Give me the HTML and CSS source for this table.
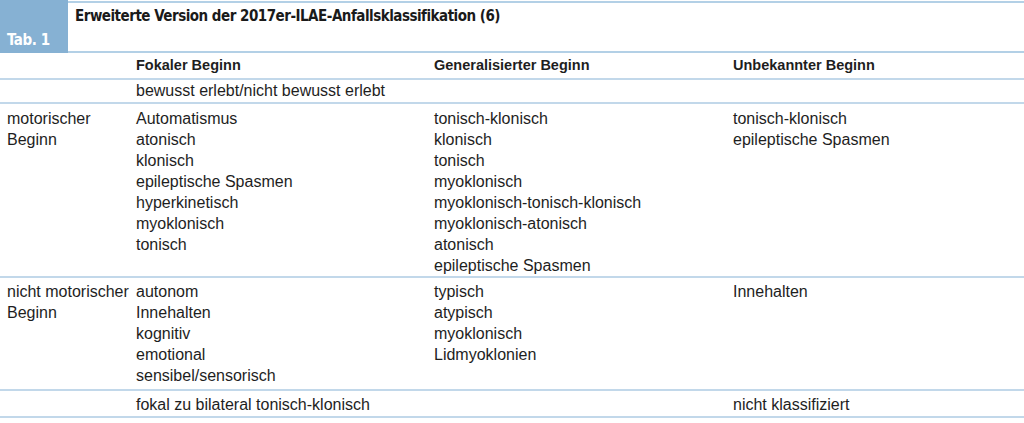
FILE: index.html
```html
<!DOCTYPE html>
<html lang="de">
<head>
<meta charset="utf-8">
<title>Tab. 1</title>
<link rel="stylesheet" href="styles.css">
</head>
<body>
<div class="caption">
  <div class="tab-label">Tab. 1</div>
  <div class="title">Erweiterte Version der 2017er-ILAE-Anfallsklassifikation (6)</div>
</div>
<table class="grid">
  <colgroup>
    <col class="c1"><col class="c2"><col class="c3"><col class="c4">
  </colgroup>
  <thead>
    <tr class="head">
      <th></th><th>Fokaler Beginn</th><th>Generalisierter Beginn</th><th>Unbekannter Beginn</th>
    </tr>
  </thead>
  <tbody>
    <tr class="sub">
      <td></td><td>bewusst erlebt/nicht bewusst erlebt</td><td></td><td></td>
    </tr>
    <tr class="motor">
      <td>motorischer<br>Beginn</td>
      <td>Automatismus<br>atonisch<br>klonisch<br>epileptische Spasmen<br>hyperkinetisch<br>myoklonisch<br>tonisch</td>
      <td>tonisch-klonisch<br>klonisch<br>tonisch<br>myoklonisch<br>myoklonisch-tonisch-klonisch<br>myoklonisch-atonisch<br>atonisch<br>epileptische Spasmen</td>
      <td>tonisch-klonisch<br>epileptische Spasmen</td>
    </tr>
    <tr class="nonmotor">
      <td>nicht motorischer<br>Beginn</td>
      <td>autonom<br>Innehalten<br>kognitiv<br>emotional<br>sensibel/sensorisch</td>
      <td>typisch<br>atypisch<br>myoklonisch<br>Lidmyoklonien</td>
      <td>Innehalten</td>
    </tr>
    <tr class="last">
      <td></td><td>fokal zu bilateral tonisch-klonisch</td><td></td><td>nicht klassifiziert</td>
    </tr>
  </tbody>
</table>
</body>
</html>
```

FILE: styles.css
```css
html, body {
  margin: 0;
  padding: 0;
  background: #ffffff;
}

body {
  width: 1024px;
  font-family: "Liberation Sans", Arial, sans-serif;
  color: #1e1e1e;
}

.caption {
  display: flex;
  margin-top: 1px;
  border-top: 2px solid #b3d0e6;
  border-bottom: 2px solid #b3d0e6;
  box-sizing: border-box;
  height: 52px;
}

.tab-label {
  width: 68px;
  flex: none;
  background: #86b1d3;
  color: #ffffff;
  font-family: "DejaVu Sans Condensed", "Liberation Sans", sans-serif;
  font-weight: bold;
  font-size: 15px;
  letter-spacing: -0.4px;
  display: flex;
  align-items: flex-end;
  padding: 0 0 4px 7px;
  box-sizing: border-box;
  margin-top: -3px;
  margin-bottom: -2px;
}

.title {
  padding: 3px 0 0 7px;
  font-family: "DejaVu Sans Condensed", "Liberation Sans", sans-serif;
  font-weight: bold;
  font-size: 15px;
  letter-spacing: -0.5px;
  line-height: 20px;
  color: #1a1a1a;
}

.grid {
  width: 1024px;
  border-collapse: collapse;
  table-layout: fixed;
  font-size: 16px;
  line-height: 21px;
}

.c1 { width: 128px; }
.c2 { width: 298px; }
.c3 { width: 299px; }
.c4 { width: 299px; }

.grid th,
.grid td {
  text-align: left;
  vertical-align: top;
  padding: 0 0 0 8px;
  white-space: nowrap;
}

.grid td:first-child {
  padding-left: 7px;
}

.grid tr {
  border-bottom: 2px solid #c2d8ea;
}

.head th {
  font-weight: bold;
  font-size: 14.5px;
  height: 26px;
  padding-top: 3px;
  padding-bottom: 0;
  line-height: 18px;
  box-sizing: border-box;
}

.sub td {
  padding-top: 0;
  padding-bottom: 1px;
}

.motor td {
  padding-top: 4px;
  padding-bottom: 0;
}

.nonmotor td {
  padding-top: 3px;
  padding-bottom: 3px;
}

.last td {
  padding-top: 3px;
  padding-bottom: 1px;
}
```
